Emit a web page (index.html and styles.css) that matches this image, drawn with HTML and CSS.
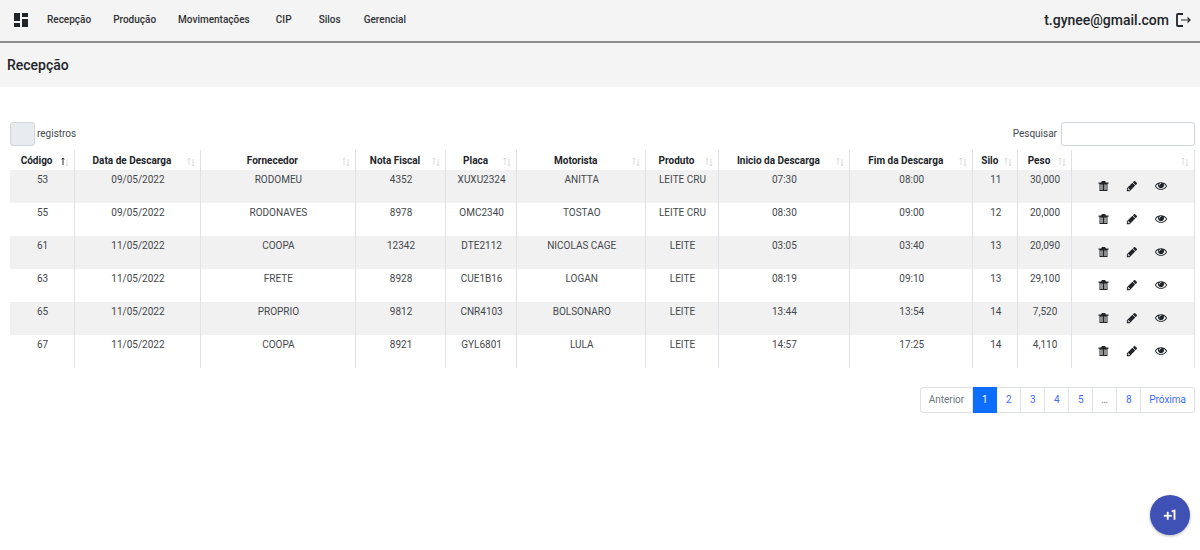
FILE: index.html
```html
<!DOCTYPE html>
<html lang="pt-BR">
<head>
<meta charset="utf-8">
<title>Recepção</title>
<link rel="stylesheet" href="styles.css">
</head>
<body>
<svg class="sprite" aria-hidden="true">
  <symbol id="trash" viewBox="0 0 12 12"><path fill-rule="evenodd" d="M5 1h3l1 1.500h2.500v1.200H10.500V11h-8V3.700H1.500V2.500H4zM3.500 4.500v5.500h1v-5.500zM5.500 4.500v5.500h.5v-5.500zM7 4.500v5.500h.5v-5.500zM8.500 4.500v5.500h1v-5.500z"/></symbol>
  <symbol id="pencil" viewBox="0 0 1792 1792"><path d="M491 1536l91-91-235-235-91 91v107h128v128h107zM960 416l416 416-832 832H128v-416zm683 96q0 53-37 90l-166 166-416-416 166-165q36-38 90-38 53 0 91 38l235 234q37 39 37 91z"/></symbol>
  <symbol id="eye" viewBox="0 64 1792 1792"><path d="M1664 960q-152-236-381-353 61 104 61 225 0 185-131.500 316.500T896 1280t-316.500-131.500T448 832q0-121 61-225-229 117-381 353 133 205 333.500 326.500T896 1408t434.500-121.500T1664 960zM944 576q0-20-14-34t-34-14q-125 0-214.500 89.500T592 832q0 20 14 34t34 14 34-14 14-34q0-86 61-147t147-61q20 0 34-14t14-34zm848 384q0 34-20 69-140 230-376.500 368.500T896 1536t-499.500-139T20 1029Q0 994 0 960t20-69q140-229 376.500-368T896 384t499.500 139T1772 891q20 35 20 69z"/></symbol>
  <symbol id="sort" viewBox="0 0 8 10"><path d="M2 8V1M0.800 2.500L2 1L3.200 2.500"/><path d="M6 2V9M4.800 7.500L6 9L7.200 7.500"/></symbol>
  <symbol id="sort-asc" viewBox="0 0 8 10"><path class="active" d="M2 8V1M0.800 2.500L2 1L3.200 2.500"/><path d="M6 2V9M4.800 7.500L6 9L7.200 7.500"/></symbol>
</svg>

<header class="topbar">
  <nav class="nav">
    <a class="home" href="#" aria-label="Painel"><svg viewBox="0 0 14 14"><path d="M0 0h6v8H0zM8 0h6v4H8zM0 10h6v4H0zM8 6h6v8H8z"/></svg></a>
    <a href="#">Recepção</a>
    <a href="#">Produção</a>
    <a href="#">Movimentações</a>
    <a href="#">CIP</a>
    <a href="#">Silos</a>
    <a href="#">Gerencial</a>
  </nav>
  <div class="user">
    <span>t.gynee@gmail.com</span>
    <a class="logout" href="#" aria-label="Sair"><svg viewBox="0 0 16 16"><path class="door" d="M8 2H3Q2 2 2 3V13Q2 14 3 14H8"/><path d="M6 8H15M12.500 5.500L15 8L12.500 10.500"/></svg></a>
  </div>
</header>
<div class="titlebar"><h1>Recepção</h1></div>

<main class="content">
  <div class="tools">
    <label class="length"><select disabled></select>registros</label>
    <label class="search">Pesquisar<input type="search"></label>
  </div>
  <table class="grid">
    <colgroup>
      <col class="c-code"><col class="c-date"><col class="c-supplier"><col class="c-invoice"><col class="c-plate"><col class="c-driver"><col class="c-product"><col class="c-start"><col class="c-end"><col class="c-silo"><col class="c-weight"><col class="c-actions">
    </colgroup>
    <thead><tr id="head"></tr></thead>
    <tbody id="rows"></tbody>
  </table>
  <nav class="pages" aria-label="Paginação">
    <a class="muted">Anterior</a><a class="current" href="#">1</a><a href="#">2</a><a href="#">3</a><a href="#">4</a><a href="#">5</a><a class="muted">…</a><a href="#">8</a><a href="#">Próxima</a>
  </nav>
</main>
<button class="fab" aria-label="Adicionar"><svg viewBox="0 0 24 24"><path d="M10 8H8v4H4v2h4v4h2v-4h4v-2h-4zm4.500-1.920V7.900l2.500-.5V18h2V5z"/></svg></button>
<script src="table.js"></script>
</body>
</html>
```
FILE: styles.css
```css
* { box-sizing: border-box; }
body { margin: 0; background: #fff; color: #212529; font: 10px/16px Roboto, sans-serif; }
a { color: inherit; text-decoration: none; }
button { border: 0; padding: 0; background: none; color: inherit; font: inherit; cursor: pointer; }
.sprite { position: absolute; width: 0; height: 0; }
svg { display: block; fill: currentColor; }

.topbar { display: flex; justify-content: space-between; align-items: center; height: 43px; padding: 0 9px 2px 14px; background: #f4f4f4; border-bottom: 2px solid #8c8c8c; }
.nav { display: flex; align-items: center; gap: 22px; color: #303234; font-weight: 500; }
.nav a { min-width: 24px; text-align: center; }
.nav .home { min-width: 0; margin-right: -3px; color: #212529; }
.home svg { width: 14px; height: 14px; }
.user { display: flex; align-items: center; gap: 6px; font-size: 14px; font-weight: 500; }
.logout svg { width: 16px; height: 16px; fill: none; stroke: currentColor; stroke-width: 1.2; }
.logout .door { stroke-width: 1.8; }
.titlebar { padding: 12px 7px; background: #f4f4f4; }
.titlebar h1 { margin: 0; font-size: 14px; line-height: 20px; font-weight: 500; }

.content { padding: 35px 5px 0 10px; }
.tools { display: flex; justify-content: space-between; margin-bottom: 4px; color: #44484c; }
.length, .search { display: flex; align-items: center; }
.length { gap: 2px; }
.search { gap: 4px; }
.length select { appearance: none; width: 25px; height: 24px; background: #e9ecef; border: 1px solid #ced4da; border-radius: 3px; opacity: 1; }
.search input { width: 134px; height: 24px; padding: 4px 8px; background: #fff; border: 1px solid #ced4da; border-radius: 3px; font: inherit; }

.grid { width: 100%; table-layout: fixed; border-collapse: separate; border-spacing: 0; }
.grid th, .grid td { padding: 0; border-right: 1px solid #dee2e6; text-align: center; vertical-align: top; }
.grid td { height: 33px; padding: 2px 0 0 1px; color: #44484c; }
.grid tbody tr:nth-child(odd) { background: #f1f1f1; }
.th { display: flex; align-items: center; width: 100%; height: 20px; padding: 1px 5px 0 2px; font-weight: 700; white-space: nowrap; }
.th span { flex: 1; }
.th svg { width: 8px; height: 10px; margin-top: 2px; fill: none; stroke: #d3d3d3; stroke-width: 0.8; }
#sort-asc .active { stroke: #333; stroke-width: 1; }
.actions { display: flex; justify-content: center; gap: 17px; padding: 8px 2px 0 0; color: #212529; }
.actions svg { width: 12px; height: 12px; }
.c-code { width: 5.5%; } .c-date { width: 10.6%; } .c-supplier { width: 13.1%; }
.c-invoice { width: 7.6%; } .c-plate { width: 6%; } .c-driver { width: 10.9%; }
.c-product { width: 6.1%; } .c-start { width: 11.1%; } .c-end { width: 10.4%; }
.c-silo { width: 3.8%; } .c-weight { width: 4.5%; } .c-actions { width: 10.4%; }

.pages { display: flex; justify-content: flex-end; margin-top: 19px; color: #3d6bfd; }
.pages a { min-width: 24px; padding: 4px 7px; border: 1px solid #dee2e6; border-left-width: 0; text-align: center; }
.pages a:first-child { padding: 4px 8px; border-left-width: 1px; border-radius: 3px 0 0 3px; }
.pages a:last-child { padding: 4px 8px; border-radius: 0 3px 3px 0; }
.pages .muted { color: #6c757d; }
.pages .current { background: #0d6efd; border-color: #0d6efd; color: #fff; }

.fab { position: fixed; right: 10px; bottom: 15px; display: grid; place-items: center; width: 40px; height: 40px; border-radius: 50%; background: #3f51b5; color: #fff; box-shadow: 0 1px 3px rgba(0, 0, 0, .3); }
.fab svg { width: 18px; height: 18px; stroke: currentColor; stroke-width: 0.5; }
```
FILE: table.js
```js
const columns = ["Código", "Data de Descarga", "Fornecedor", "Nota Fiscal", "Placa", "Motorista", "Produto", "Inicio da Descarga", "Fim da Descarga", "Silo", "Peso", ""];
const rows = [
  ["53", "09/05/2022", "RODOMEU", "4352", "XUXU2324", "ANITTA", "LEITE CRU", "07:30", "08:00", "11", "30,000"],
  ["55", "09/05/2022", "RODONAVES", "8978", "OMC2340", "TOSTAO", "LEITE CRU", "08:30", "09:00", "12", "20,000"],
  ["61", "11/05/2022", "COOPA", "12342", "DTE2112", "NICOLAS CAGE", "LEITE", "03:05", "03:40", "13", "20,090"],
  ["63", "11/05/2022", "FRETE", "8928", "CUE1B16", "LOGAN", "LEITE", "08:19", "09:10", "13", "29,100"],
  ["65", "11/05/2022", "PROPRIO", "9812", "CNR4103", "BOLSONARO", "LEITE", "13:44", "13:54", "14", "7,520"],
  ["67", "11/05/2022", "COOPA", "8921", "GYL6801", "LULA", "LEITE", "14:57", "17:25", "14", "4,110"]
];
const action = (icon, label) => `<button aria-label="${label}"><svg><use href="#${icon}"/></svg></button>`;
const actions = `<td><div class="actions">${action("trash", "Excluir")}${action("pencil", "Editar")}${action("eye", "Visualizar")}</div></td>`;
document.getElementById("head").innerHTML = columns.map((name, i) =>
  `<th><button class="th" aria-label="Ordenar ${name}"><span>${name}</span><svg><use href="#${i ? "sort" : "sort-asc"}"/></svg></button></th>`).join("");
document.getElementById("rows").innerHTML = rows.map(row =>
  `<tr>${row.map(cell => `<td>${cell}</td>`).join("")}${actions}</tr>`).join("");
```
